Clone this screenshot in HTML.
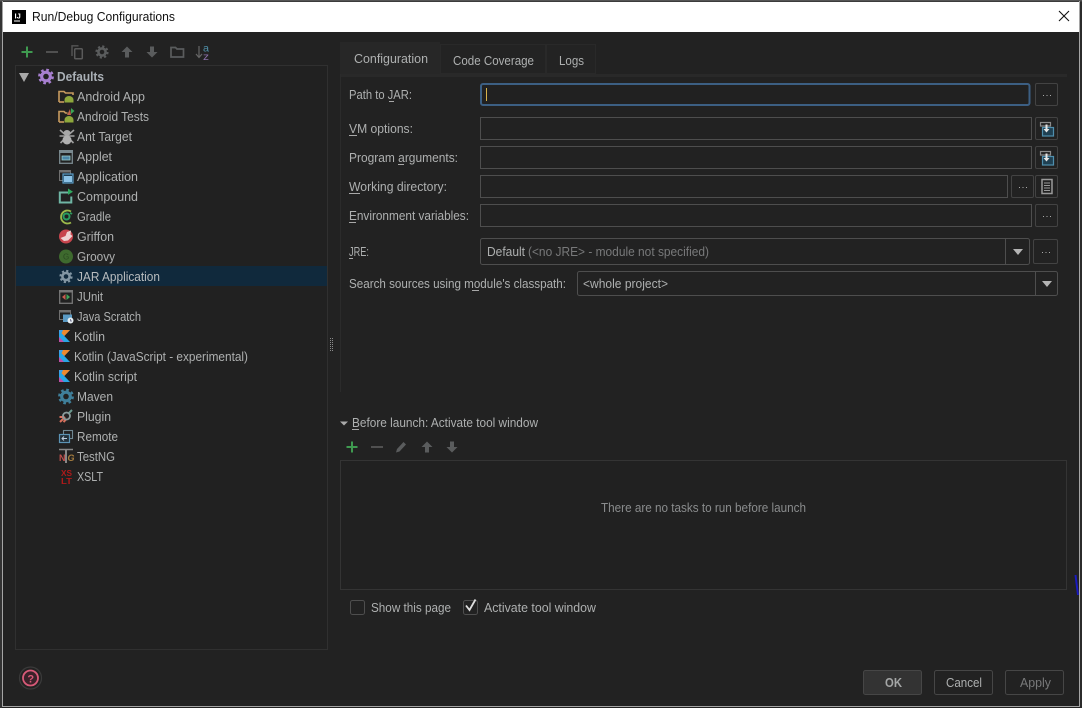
<!DOCTYPE html>
<html><head><meta charset="utf-8"><title>Run/Debug Configurations</title>
<style>
html,body{margin:0;padding:0;background:#222;overflow:hidden}
svg{display:block}
text{font-family:"Liberation Sans",sans-serif;font-size:12.5px;fill:#aeb0b0}
.d{fill:#78797a}
.f{fill:none;stroke:#4e4e4e;stroke-width:1}
.b{fill:none;stroke:#434343;stroke-width:1}
.u{stroke:#a8a8a8;stroke-width:1}
.g{fill:#5a5c5d}
.k{fill:#a5a5a5}
</style></head><body>
<svg width="1082" height="708" viewBox="0 0 1082 708" xmlns="http://www.w3.org/2000/svg">
<defs>
<g id="gear"><circle r="3.600" fill="none" stroke="currentColor" stroke-width="2.600"/><circle r="5.600" fill="none" stroke="currentColor" stroke-width="2" stroke-dasharray="2.200 2.200"/></g>
<g id="kt"><path d="M59 330h11l-5.700 6 5.700 6h-11z" fill="#28a6e6"/><path d="M63 330h7l-5.700 6-2.800-2.800z" fill="#ee8a2e"/><path d="M59 337l5 5h-5z" fill="#c04fa6"/><path d="M59 330h4l-4 4z" fill="#3fa0e8"/></g>
<g id="imp"><rect x="1042.500" y="127.500" width="11" height="8.500" fill="#1f4052" stroke="#4f8fae" stroke-width="1.200"/><rect x="1040.500" y="122.500" width="10" height="3.500" fill="#222" stroke="#8c8c8c" stroke-width="1.200"/><path d="M1045.500 124.500h2v4.500h2l-3 3.500-3-3.500h2z" fill="#e6e6e6"/></g>
</defs>
<rect width="1082" height="708" fill="#222222"/>
<rect x="0" y="0" width="2" height="708" fill="#333"/>
<rect x="1080" y="0" width="2" height="708" fill="#2b2b2b"/>
<rect x="0" y="0" width="1082" height="1.500" fill="#555"/>
<rect x="2" y="1" width="1" height="706" fill="#a5a5a5"/>
<rect x="1079" y="1" width="1" height="706" fill="#a5a5a5"/>
<rect x="2" y="706" width="1078" height="1" fill="#a5a5a5"/>
<rect x="3" y="2" width="1076" height="30" fill="#ffffff"/>
<rect x="12" y="10" width="14" height="14" fill="#000"/>
<text x="14.500" y="18.500" style="font-size:7.500px;font-weight:bold;fill:#fff">IJ</text>
<rect x="14" y="20.500" width="6" height="1" fill="#fff"/>
<text x="32" y="21" textLength="143" lengthAdjust="spacingAndGlyphs" style="fill:#111">Run/Debug Configurations</text>
<path d="M1059 11 L1069 21 M1069 11 L1059 21" stroke="#111" stroke-width="1.100"/>

<!-- left toolbar -->
<path d="M27 46.500v11M21.500 52h11" stroke="#3f9a50" stroke-width="2"/>
<rect x="46" y="51" width="12" height="2" fill="#505050"/>
<path d="M72 56v-10.200h6.500" fill="none" stroke="#555" stroke-width="1.400"/>
<rect x="74.700" y="48.700" width="7.600" height="10" rx="1" fill="none" stroke="#5a5a5a" stroke-width="1.500"/>
<use href="#gear" x="102" y="52" style="color:#5a5c5d"/>
<path class="g" d="M127 46.500l5.500 5.500h-3.500v5.500h-4v-5.500h-3.500z"/>
<path class="g" d="M152 57.500l5.500-5.500h-3.500v-5.500h-4v5.500h-3.500z"/>
<path d="M171 47.500h4.500l1.500 1.500h6.500v8h-12.500z" fill="none" stroke="#5a5c5d" stroke-width="1.700"/>
<path d="M199 46v11M196 54l3 3.500 3-3.500" fill="none" stroke="#666" stroke-width="1.200"/>
<text x="203" y="51.500" textLength="6" lengthAdjust="spacingAndGlyphs" style="font-size:10px;fill:#4f8fa8">a</text>
<text x="203" y="60" textLength="6" lengthAdjust="spacingAndGlyphs" style="font-size:10px;fill:#8a6fa8">z</text>

<!-- tree -->
<rect x="15.500" y="65.500" width="312" height="584" fill="#212121" stroke="#303030"/>
<rect x="16" y="266" width="311" height="20" fill="#10293c"/>
<path d="M19 73h10l-5 9z" fill="#a9a9a9"/>
<g transform="translate(46 76.500) scale(1.200)"><use href="#gear" style="color:#a77fd0"/></g>
<text x="57" y="81" textLength="47" lengthAdjust="spacingAndGlyphs" style="font-weight:bold;fill:#aab0b6">Defaults</text>

<!-- android app -->
<path d="M59 102v-10.500h5l1.500 1.500h7.500v2" fill="none" stroke="#c79b5f" stroke-width="1.600"/><path d="M59 102h5" stroke="#c79b5f" stroke-width="1.600"/>
<path d="M64.500 102.500v-2.500a4.500 4 0 0 1 9 0v2.500z" fill="#8ea83c"/>
<text x="77" y="101" textLength="68" lengthAdjust="spacingAndGlyphs">Android App</text>
<!-- android tests -->
<path d="M59 122v-10.500h5l1.500 1.500h2" fill="none" stroke="#c79b5f" stroke-width="1.600"/><path d="M59 122h5" stroke="#c79b5f" stroke-width="1.600"/>
<path d="M64.500 122.500v-2.500a4.500 4 0 0 1 9 0v2.500z" fill="#8ea83c"/>
<path d="M67 115l3-6 1 6z" fill="#c0644c"/><path d="M71 108l3.500 3-3.500 3z" fill="#3aa655"/>
<text x="77" y="121" textLength="72" lengthAdjust="spacingAndGlyphs">Android Tests</text>
<!-- ant -->
<path d="M60 130l4.500 4M74 130l-4.500 4M59.500 136h15M60.500 143l4-4M73.500 143l-4-4" stroke="#a0a0a0" stroke-width="1.600"/>
<ellipse cx="67" cy="133" rx="3.500" ry="3" fill="#a8a8a8"/><ellipse cx="67" cy="140" rx="4.500" ry="4.500" fill="#b0b0b0"/>
<text x="77" y="141" textLength="55" lengthAdjust="spacingAndGlyphs">Ant Target</text>
<!-- applet -->
<rect x="59.700" y="150.700" width="12.600" height="12.600" fill="none" stroke="#7a8a90" stroke-width="1.300"/>
<rect x="59" y="150" width="14" height="3" fill="#7a8a90"/>
<rect x="62" y="156" width="8" height="4" fill="#4a86a8" stroke="#9cc" stroke-width=".8"/>
<text x="77" y="161" textLength="35" lengthAdjust="spacingAndGlyphs">Applet</text>
<!-- application -->
<rect x="59.500" y="170.500" width="11" height="10" fill="none" stroke="#707070"/>
<rect x="59" y="170" width="12" height="2.500" fill="#707070"/>
<rect x="63" y="174" width="10" height="9" fill="#1f3a4d" stroke="#5a9ac4" stroke-width="1.200"/>
<rect x="64" y="176" width="8" height="6" fill="#8cc2e6"/>
<text x="77" y="181" textLength="61" lengthAdjust="spacingAndGlyphs">Application</text>
<!-- compound -->
<path d="M68 192.500h-8.200v10h11.500v-6" fill="none" stroke="#6fb5a4" stroke-width="2"/>
<path d="M68 188.500l5 3.200-5 3.200z" fill="#2faa5f"/>
<text x="77" y="201" textLength="61" lengthAdjust="spacingAndGlyphs">Compound</text>
<!-- gradle -->
<path d="M71 211.500a6.500 6.500 0 1 0 0 11" fill="none" stroke="#9ab84a" stroke-width="1.800"/>
<path d="M70 213a6 6 0 0 1 2 1" stroke="#2f9a5f" stroke-width="1.800"/>
<circle cx="66.500" cy="216.500" r="3" fill="none" stroke="#2a9d62" stroke-width="2"/>
<text x="77" y="221" textLength="34" lengthAdjust="spacingAndGlyphs">Gradle</text>
<!-- griffon -->
<circle cx="66" cy="236.500" r="7" fill="#c7454d"/>
<path d="M60.500 238l5-2 1.500-4 4-1.500-.5 4 2 1.500-4.500 4.500-4 0.500z" fill="#eed4d4"/>
<text x="77" y="241" textLength="37" lengthAdjust="spacingAndGlyphs">Griffon</text>
<!-- groovy -->
<circle cx="66" cy="256.500" r="7" fill="#3e6a2e"/>
<text x="63" y="259.500" style="font-size:8px;fill:#2a4a20">G</text>
<text x="77" y="261" textLength="38" lengthAdjust="spacingAndGlyphs">Groovy</text>
<!-- jar -->
<use href="#gear" x="66" y="276.500" style="color:#8396a3"/>
<text x="77" y="281" textLength="83" lengthAdjust="spacingAndGlyphs" style="fill:#b8bcbe">JAR Application</text>
<!-- junit -->
<rect x="59.700" y="290.700" width="12.600" height="12.600" fill="none" stroke="#777" stroke-width="1.300"/>
<rect x="59" y="290" width="14" height="2.500" fill="#777"/>
<path d="M65.500 294l-3.500 3 3.500 3z" fill="#c75c50"/><path d="M66.500 294l3.500 3-3.500 3z" fill="#3fa65a"/>
<text x="77" y="301" textLength="26" lengthAdjust="spacingAndGlyphs">JUnit</text>
<!-- scratch -->
<rect x="59.500" y="310.500" width="11" height="9" fill="none" stroke="#707070"/>
<rect x="59" y="310" width="12" height="2.500" fill="#707070"/>
<rect x="63" y="314.500" width="9" height="7.500" fill="#5a9ac4"/>
<circle cx="70.500" cy="320.500" r="3" fill="#e6eef2"/><path d="M70.500 319v2h1.500" stroke="#557" stroke-width=".7" fill="none"/>
<text x="77" y="321" textLength="64" lengthAdjust="spacingAndGlyphs">Java Scratch</text>
<!-- kotlin -->
<use href="#kt"/>
<text x="74" y="341" textLength="31" lengthAdjust="spacingAndGlyphs">Kotlin</text>
<use href="#kt" y="20"/>
<text x="74" y="361" textLength="174" lengthAdjust="spacingAndGlyphs">Kotlin (JavaScript - experimental)</text>
<use href="#kt" y="40"/>
<text x="74" y="381" textLength="63" lengthAdjust="spacingAndGlyphs">Kotlin script</text>
<!-- maven -->
<g transform="translate(66 396.500) scale(1.200)"><use href="#gear" style="color:#3f7f9a"/></g>
<text x="77" y="401" textLength="36" lengthAdjust="spacingAndGlyphs">Maven</text>
<!-- plugin -->
<path d="M60 422l5-5M59.500 417h4l2 3-2 2" fill="none" stroke="#d9705c" stroke-width="2"/>
<circle cx="66.500" cy="416" r="3.500" fill="none" stroke="#8a9a9a" stroke-width="1.800"/>
<path d="M69 413l3-3" stroke="#6a9a90" stroke-width="2"/>
<text x="77" y="421" textLength="34" lengthAdjust="spacingAndGlyphs">Plugin</text>
<!-- remote -->
<rect x="63.500" y="430.500" width="9" height="8" fill="none" stroke="#6f8792" stroke-width="1.100"/>
<rect x="59.500" y="434.500" width="10" height="8" fill="#22313a" stroke="#5b93b4" stroke-width="1.200"/>
<path d="M62 438.500h5M64 436.500l-2 2 2 2" fill="none" stroke="#bcd" stroke-width="1"/>
<text x="77" y="441" textLength="41" lengthAdjust="spacingAndGlyphs">Remote</text>
<!-- testng -->
<path d="M59 449.500h14" stroke="#888" stroke-width="1.500"/><path d="M66 449v14" stroke="#888" stroke-width="2"/>
<text x="59" y="461" style="font-size:9px;font-weight:bold;fill:#c0504d">N</text>
<text x="67.500" y="461" style="font-size:9px;font-style:italic;font-weight:bold;fill:#a87f40">G</text>
<text x="77" y="461" textLength="38" lengthAdjust="spacingAndGlyphs">TestNG</text>
<!-- xslt -->
<text x="61" y="476" textLength="11" lengthAdjust="spacingAndGlyphs" style="font-size:8.500px;font-weight:bold;fill:#b01a1a">XS</text>
<text x="61" y="484" textLength="11" lengthAdjust="spacingAndGlyphs" style="font-size:8.500px;font-weight:bold;fill:#b01a1a">LT</text>
<text x="77" y="481" textLength="26" lengthAdjust="spacingAndGlyphs">XSLT</text>

<!-- splitter -->
<path d="M330.500 338v14M332.500 338v14" stroke="#8a8a8a" stroke-width="1" stroke-dasharray="1 1"/>

<!-- tabs -->
<rect x="340" y="42" width="100" height="32" fill="#272727"/>
<rect x="440.500" y="44.500" width="105" height="29" fill="#232323" stroke="#292929"/>
<rect x="546.500" y="44.500" width="49" height="29" fill="#232323" stroke="#292929"/>
<rect x="340" y="74" width="727" height="3" fill="#292929"/>
<rect x="340" y="74" width="1" height="318" fill="#2b2b2b"/>
<text x="354" y="63" textLength="74" lengthAdjust="spacingAndGlyphs">Configuration</text>
<text x="453" y="65" textLength="81" lengthAdjust="spacingAndGlyphs">Code Coverage</text>
<text x="559" y="65" textLength="25" lengthAdjust="spacingAndGlyphs">Logs</text>

<!-- form labels -->
<text x="349" y="99" textLength="63" lengthAdjust="spacingAndGlyphs">Path to JAR:</text><path class="u" d="M389 101.500h5"/>
<text x="349" y="133" textLength="64" lengthAdjust="spacingAndGlyphs">VM options:</text><path class="u" d="M349 135.500h8"/>
<text x="349" y="162" textLength="109" lengthAdjust="spacingAndGlyphs">Program arguments:</text><path class="u" d="M398 164.500h6"/>
<text x="349" y="191" textLength="98" lengthAdjust="spacingAndGlyphs">Working directory:</text><path class="u" d="M349 193.500h11"/>
<text x="349" y="220" textLength="120" lengthAdjust="spacingAndGlyphs">Environment variables:</text><path class="u" d="M349 222.500h7"/>
<text x="349" y="256" textLength="20" lengthAdjust="spacingAndGlyphs">JRE:</text><path class="u" d="M349 258.500h4"/>
<text x="349" y="288" textLength="217" lengthAdjust="spacingAndGlyphs">Search sources using module's classpath:</text><path class="u" d="M472 290.500h7"/>

<!-- fields -->
<rect x="481" y="84" width="548.500" height="21" rx="2" fill="#212121" stroke="#3c5f83" stroke-width="2"/>
<rect x="486" y="88" width="1" height="13" fill="#d8b34a"/>
<rect x="1035.500" y="83.500" width="22" height="22" rx="1.500" class="b"/>
<path d="M1043 95.500h1M1046.500 95.500h1M1050 95.500h1" stroke="#aaa"/>

<rect x="480.500" y="117.500" width="551" height="22" class="f"/>
<rect x="1035.500" y="117.500" width="22" height="22" rx="1.500" class="b"/>
<rect x="480.500" y="146.500" width="551" height="22" class="f"/>
<rect x="1035.500" y="146.500" width="22" height="22" rx="1.500" class="b"/>
<use href="#imp"/>
<use href="#imp" y="29"/>

<rect x="480.500" y="175.500" width="527" height="22" class="f"/>
<rect x="1011.500" y="175.500" width="22" height="22" rx="1.500" class="b"/>
<path d="M1019 187.500h1M1022.500 187.500h1M1026 187.500h1" stroke="#aaa"/>
<rect x="1035.500" y="175.500" width="22" height="22" rx="1.500" class="b"/>
<rect x="1042" y="179.500" width="10" height="14" fill="none" stroke="#9a9a9a" stroke-width="1.500"/>
<path d="M1044 183h6M1044 185.500h6M1044 188h6M1044 190.500h6" stroke="#9a9a9a"/>

<rect x="480.500" y="204.500" width="551" height="22" class="f"/>
<rect x="1035.500" y="204.500" width="22" height="22" rx="1.500" class="b"/>
<path d="M1043 216.500h1M1046.500 216.500h1M1050 216.500h1" stroke="#aaa"/>

<rect x="480.500" y="238.500" width="549" height="26" rx="2" class="f"/>
<path d="M1005.500 238.500v26" stroke="#4e4e4e"/>
<path d="M1013 249h10l-5 6z" fill="#b4b4b4"/>
<text x="487" y="256" textLength="38" lengthAdjust="spacingAndGlyphs">Default</text>
<text x="528" y="256" textLength="181" lengthAdjust="spacingAndGlyphs" class="d">(&lt;no JRE&gt; - module not specified)</text>
<rect x="1033.500" y="239.500" width="24" height="24" rx="1.500" class="b"/>
<path d="M1042 252.500h1M1045.500 252.500h1M1049 252.500h1" stroke="#aaa"/>

<rect x="577.500" y="271.500" width="480" height="24" rx="2" class="f"/>
<path d="M1035.500 271.500v24" stroke="#4e4e4e"/>
<path d="M1042 281h10l-5 6z" fill="#b4b4b4"/>
<text x="583" y="288" textLength="85" lengthAdjust="spacingAndGlyphs">&lt;whole project&gt;</text>

<!-- before launch -->
<path d="M340 421.500h8l-4 4z" fill="#aaa"/>
<text x="352" y="427" textLength="186" lengthAdjust="spacingAndGlyphs">Before launch: Activate tool window</text><path class="u" d="M352 429.500h7"/>
<path d="M352 441.500v11M346.500 447h11" stroke="#3f9a50" stroke-width="2"/>
<rect x="371" y="446" width="12" height="2" fill="#505050"/>
<path class="g" d="M396 452.500l1-3.500 6.500-7 2.500 2.500-6.500 7z"/>
<path class="g" d="M427 441.500l5.500 5.500h-3.500v5.500h-4v-5.500h-3.500z"/>
<path class="g" d="M452 452.500l5.500-5.500h-3.500v-5.500h-4v5.500h-3.500z"/>
<rect x="340.500" y="460.500" width="726" height="129" fill="#212121" stroke="#343434"/>
<text x="601" y="512" textLength="205" lengthAdjust="spacingAndGlyphs" style="fill:#8a8c8d">There are no tasks to run before launch</text>

<rect x="350.500" y="600.500" width="14" height="14" rx="2" fill="none" stroke="#4e4e4e"/>
<text x="371" y="612" textLength="80" lengthAdjust="spacingAndGlyphs">Show this page</text>
<rect x="463.500" y="600.500" width="14" height="14" rx="2" fill="none" stroke="#4e4e4e"/>
<path d="M466 605.500l3.500 4.500 6-10.500" fill="none" stroke="#dedede" stroke-width="1.800"/>
<text x="484" y="612" textLength="112" lengthAdjust="spacingAndGlyphs">Activate tool window</text>

<!-- blue artifact -->
<path d="M1075.500 575l2.500 20" stroke="#1a1ac0" stroke-width="2"/>

<!-- footer -->
<circle cx="30.500" cy="678" r="11" fill="none" stroke="#3a3a3a" stroke-width="1.200"/>
<circle cx="30.500" cy="678" r="7.500" fill="#3a2129" stroke="#d85a78" stroke-width="1.800"/>
<text x="27.400" y="682.300" style="font-size:11px;font-weight:bold;fill:#d85a78">?</text>

<rect x="863.500" y="670.500" width="58" height="24" rx="2" fill="#333" stroke="#464646"/>
<text x="885" y="687" textLength="17" lengthAdjust="spacingAndGlyphs" style="font-weight:bold;fill:#a4a6a6">OK</text>
<rect x="934.500" y="670.500" width="58" height="24" rx="2" fill="none" stroke="#464646"/>
<text x="946" y="687" textLength="36" lengthAdjust="spacingAndGlyphs">Cancel</text>
<rect x="1005.500" y="670.500" width="58" height="24" rx="2" fill="none" stroke="#464646"/>
<text x="1020" y="687" textLength="31" lengthAdjust="spacingAndGlyphs" class="d">Apply</text>
</svg>
</body></html>
